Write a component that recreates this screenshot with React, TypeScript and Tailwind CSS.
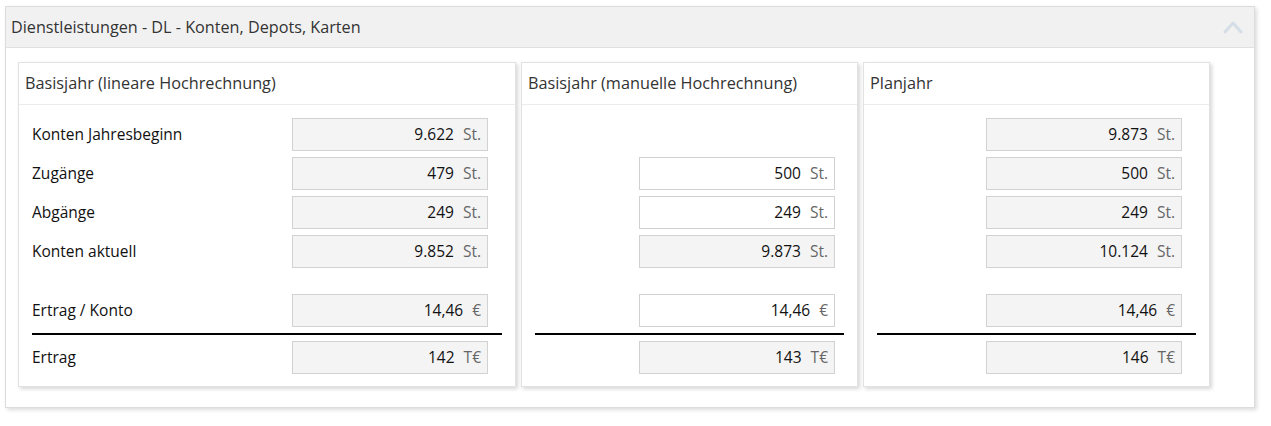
import React from "react";

function Field({ value, unit, editable }: { value: string; unit: string; editable?: boolean }) {
  return (
    <div
      className={`flex h-[33px] w-[196px] items-center justify-end border border-[#d2d2d2] pr-[6px] ${
        editable ? "bg-white" : "bg-[#f4f4f4]"
      }`}
    >
      <span className="text-[15.5px] text-[#111]">{value}</span>
      <span className="ml-[9px] text-[15.5px] text-[#666]">{unit}</span>
    </div>
  );
}

function FieldRow({ label, value, unit, editable, pr }: { label?: string; value?: string; unit?: string; editable?: boolean; pr: string }) {
  return (
    <div className={`flex h-[33px] items-center ${pr}`}>
      <div className="flex-1 text-[15.5px] text-[#111]">{label}</div>
      {value !== undefined && unit !== undefined ? <Field value={value} unit={unit} editable={editable} /> : null}
    </div>
  );
}

type CardProps = {
  title: string;
  width: string;
  pr: string;
  rows: { label?: string; value?: string; unit?: string; editable?: boolean }[];
};

function Card({ title, width, pr, rows }: CardProps) {
  return (
    <div className={`${width} border border-[#e2e2e2] bg-white shadow-[2px_2px_4px_rgba(0,0,0,0.16)]`}>
      <div className="flex h-[42px] items-center border-b border-[#ececec] pl-[6px] text-[16.25px] text-[#333]">
        {title}
      </div>
      <div className="px-[13px] pb-[12px] pt-[13px]">
        <div className="flex flex-col gap-[6px]">
          {rows.slice(0, 4).map((r, i) => (
            <FieldRow key={i} {...r} pr={pr} />
          ))}
        </div>
        <div className="mt-[26px]">
          <FieldRow {...rows[4]} pr={pr} />
        </div>
        <div className="my-[6px] h-[2px] bg-black" />
        <FieldRow {...rows[5]} pr={pr} />
      </div>
    </div>
  );
}

export default function App() {
  return (
    <div className="h-[426px] w-[1271px] bg-white pl-[5px] pt-[6px]" style={{ fontFamily: '"Open Sans", sans-serif' }}>
      <div className="w-[1250px] border border-[#dcdcdc] bg-white shadow-[2px_2px_4px_rgba(0,0,0,0.14)]">
        <div className="flex h-[41px] items-center justify-between border-b border-[#e0e0e0] bg-[#f1f1f1] pl-[5px] pr-[11px]">
          <span className="text-[16.2px] text-[#333]">Dienstleistungen - DL - Konten, Depots, Karten</span>
          <svg width="20" height="14" viewBox="0 0 20 14" fill="none">
            <path d="M2 12 L10 3 L18 12" stroke="#d5dee7" strokeWidth="3" strokeLinecap="round" strokeLinejoin="round" />
          </svg>
        </div>
        <div className="flex gap-[5px] pb-[20px] pl-[12px] pt-[14px]">
          <Card
            title="Basisjahr (lineare Hochrechnung)"
            width="w-[498px]"
            pr="pr-[14px]"
            rows={[
              { label: "Konten Jahresbeginn", value: "9.622", unit: "St." },
              { label: "Zugänge", value: "479", unit: "St." },
              { label: "Abgänge", value: "249", unit: "St." },
              { label: "Konten aktuell", value: "9.852", unit: "St." },
              { label: "Ertrag / Konto", value: "14,46", unit: "€" },
              { label: "Ertrag", value: "142", unit: "T€" },
            ]}
          />
          <Card
            title="Basisjahr (manuelle Hochrechnung)"
            width="w-[337px]"
            pr="pr-[9px]"
            rows={[
              {},
              { value: "500", unit: "St.", editable: true },
              { value: "249", unit: "St.", editable: true },
              { value: "9.873", unit: "St." },
              { value: "14,46", unit: "€", editable: true },
              { value: "143", unit: "T€" },
            ]}
          />
          <Card
            title="Planjahr"
            width="w-[347px]"
            pr="pr-[14px]"
            rows={[
              { value: "9.873", unit: "St." },
              { value: "500", unit: "St." },
              { value: "249", unit: "St." },
              { value: "10.124", unit: "St." },
              { value: "14,46", unit: "€" },
              { value: "146", unit: "T€" },
            ]}
          />
        </div>
      </div>
    </div>
  );
}
